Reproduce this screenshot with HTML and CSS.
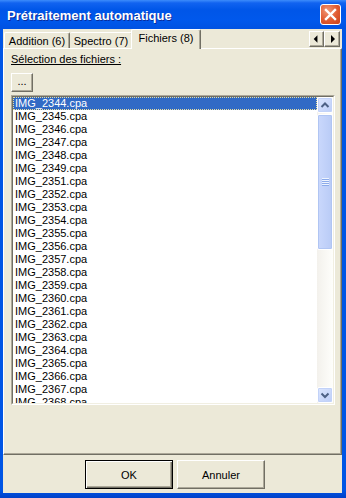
FILE: index.html
```html
<!DOCTYPE html>
<html lang="fr">
<head>
<meta charset="utf-8">
<title>Prétraitement automatique</title>
<link rel="stylesheet" href="styles.css">
</head>
<body>
<div class="window">
  <div class="titlebar">
    <span class="title">Prétraitement automatique</span>
    <span class="close">
      <svg width="19" height="19" viewBox="0 0 19 19"><path d="M5 5 L14 14 M14 5 L5 14" stroke="#fff" stroke-width="2.4" stroke-linecap="square" fill="none"/></svg>
    </span>
  </div>
  <div class="client">
    <div class="tabrow">
      <div class="tab tab-a">Addition (6)</div>
      <div class="tab tab-b">Spectro (7)</div>
      <div class="tab tab-sel">Fichiers (8)</div>
      <div class="tabscroll">
        <span class="sbtn"><svg width="14" height="14" viewBox="0 0 14 14"><polygon points="8,3 8,11 4,7" fill="#000"/></svg></span>
        <span class="sbtn"><svg width="14" height="14" viewBox="0 0 14 14"><polygon points="6,3 6,11 10,7" fill="#000"/></svg></span>
      </div>
    </div>
    <div class="panel">
      <div class="label">Sélection des fichiers :</div>
      <div class="dots">...</div>
      <div class="list">
        <div class="list-in">
          <div class="items">
            <div class="item sel">IMG_2344.cpa</div>
            <div class="item">IMG_2345.cpa</div>
            <div class="item">IMG_2346.cpa</div>
            <div class="item">IMG_2347.cpa</div>
            <div class="item">IMG_2348.cpa</div>
            <div class="item">IMG_2349.cpa</div>
            <div class="item">IMG_2351.cpa</div>
            <div class="item">IMG_2352.cpa</div>
            <div class="item">IMG_2353.cpa</div>
            <div class="item">IMG_2354.cpa</div>
            <div class="item">IMG_2355.cpa</div>
            <div class="item">IMG_2356.cpa</div>
            <div class="item">IMG_2357.cpa</div>
            <div class="item">IMG_2358.cpa</div>
            <div class="item">IMG_2359.cpa</div>
            <div class="item">IMG_2360.cpa</div>
            <div class="item">IMG_2361.cpa</div>
            <div class="item">IMG_2362.cpa</div>
            <div class="item">IMG_2363.cpa</div>
            <div class="item">IMG_2364.cpa</div>
            <div class="item">IMG_2365.cpa</div>
            <div class="item">IMG_2366.cpa</div>
            <div class="item">IMG_2367.cpa</div>
            <div class="item">IMG_2368.cpa</div>
          </div>
          <div class="vscroll">
            <div class="arrow"><svg width="14" height="14" viewBox="0 0 14 14"><path d="M3.5 9 L7 5.5 L10.5 9" stroke="#4D6185" stroke-width="2" fill="none"/></svg></div>
            <div class="track">
              <div class="thumb"><div class="grip"><i></i><i></i><i></i><i></i></div></div>
            </div>
            <div class="arrow"><svg width="14" height="14" viewBox="0 0 14 14"><path d="M3.5 5.5 L7 9 L10.5 5.5" stroke="#4D6185" stroke-width="2" fill="none"/></svg></div>
          </div>
        </div>
      </div>
    </div>
    <div class="footer">
      <div class="btn btn-default">OK</div>
      <div class="btn">Annuler</div>
    </div>
  </div>
</div>
</body>
</html>
```
FILE: styles.css
```css
* { box-sizing: border-box; }
html, body { margin: 0; padding: 0; }
body {
  width: 346px;
  height: 498px;
  overflow: hidden;
  font-family: "Liberation Sans", Arial, sans-serif;
  font-size: 11px;
  color: #000;
}
.window {
  width: 346px;
  height: 498px;
  display: flex;
  flex-direction: column;
  background: linear-gradient(to bottom, #0055E5 0, #0055E5 490px, #0041C8 498px);
}
.titlebar {
  height: 29px;
  flex: none;
  display: flex;
  align-items: center;
  padding-left: 7px;
  padding-top: 2px;
  background: linear-gradient(to bottom, #3D8CFB 0, #1163F0 3px, #0056E8 10px, #0058EC 20px, #0052E2 29px);
}
.title {
  color: #fff;
  font-weight: bold;
  font-size: 13px;
  text-shadow: 1px 1px 0 #0A2C9A;
}
.close {
  margin-left: auto;
  margin-right: 5px;
  margin-top: -2px;
  width: 21px;
  height: 21px;
  border: 1px solid #fff;
  border-radius: 3px;
  background: radial-gradient(circle at 35% 30%, #F09878 0, #E05A30 55%, #C8401A 100%);
  display: flex;
  align-items: center;
  justify-content: center;
}
.client {
  flex: 1;
  margin: 0 4px 5px 3px;
  background: #ECE9D8;
  display: flex;
  flex-direction: column;
}
.tabrow {
  height: 19px;
  flex: none;
  display: flex;
  align-items: flex-end;
  padding-left: 1px;
}
.tab {
  height: 16px;
  padding-top: 2px;
  line-height: 13px;
  text-align: center;
  border-top: 1px solid #fff;
  border-left: 1px solid #fff;
  border-right: 1px solid #716F64;
  border-radius: 2px 2px 0 0;
  box-shadow: inset -1px 0 0 #ACA899;
  background: #ECE9D8;
}
.tab-a { width: 66px; }
.tab-b { width: 63px; border-left: none; }
.tab-sel {
  width: 70px;
  height: 20px;
  margin: 0 0 -1px -2px;
  padding-top: 2px;
  position: relative;
  z-index: 1;
}
.tabscroll {
  margin-left: auto;
  margin-right: 2px;
  align-self: flex-start;
  margin-top: 2px;
  display: flex;
}
.sbtn {
  width: 15px;
  height: 16px;
  border: 1px solid;
  border-color: #fff #716F64 #716F64 #fff;
  box-shadow: inset -1px -1px 0 #ACA899;
  display: flex;
  align-items: center;
  justify-content: center;
}
.sbtn + .sbtn { width: 16px; }
.panel {
  flex: 1;
  border-top: 1px solid #fff;
  border-left: 1px solid #fff;
  border-right: 1px solid #716F64;
  border-bottom: 1px solid #716F64;
  box-shadow: inset -1px -1px 0 #ACA899;
  padding: 4px 0 0 7px;
  display: flex;
  flex-direction: column;
  align-items: flex-start;
}
.label {
  line-height: 13px;
  text-decoration: underline;
}
.dots {
  margin-top: 7px;
  width: 22px;
  height: 19px;
  border: 1px solid;
  border-color: #fff #716F64 #716F64 #fff;
  box-shadow: inset -1px -1px 0 #ACA899;
  text-align: center;
  line-height: 15px;
}
.list {
  margin-top: 3px;
  width: 324px;
  height: 310px;
  border: 1px solid;
  border-color: #ACA899 #fff #fff #ACA899;
}
.list-in {
  height: 100%;
  border: 1px solid;
  border-color: #716F64 #F1EFE2 #F1EFE2 #716F64;
  background: #fff;
  display: flex;
}
.items {
  flex: 1;
  overflow: hidden;
}
.item {
  height: 13px;
  line-height: 13px;
  padding-left: 2px;
  white-space: nowrap;
}
.item.sel {
  background: #316AC5;
  color: #fff;
  border: 1px dotted #E8DFA0;
  padding-left: 1px;
  line-height: 11px;
}
.vscroll {
  width: 16px;
  flex: none;
  display: flex;
  flex-direction: column;
  background: linear-gradient(to right, #F3F1EC, #FEFEFB);
}
.arrow {
  height: 16px;
  flex: none;
  border: 1px solid #fff;
  border-radius: 2px;
  background: linear-gradient(to bottom right, #DDE7FE, #BCCDF8);
  box-shadow: inset 0 0 0 1px #C2D2F8;
  display: flex;
  align-items: center;
  justify-content: center;
}
.track {
  flex: 1;
  padding-top: 1px;
}
.thumb {
  height: 136px;
  border: 1px solid #fff;
  border-radius: 2px;
  background: linear-gradient(to right, #CAD8FC, #B9CBF6);
  box-shadow: inset 0 0 0 1px #B0C5F3;
  display: flex;
  align-items: center;
  justify-content: center;
}
.grip {
  display: flex;
  flex-direction: column;
  width: 7px;
}
.grip i {
  display: block;
  background: #EEF4FE;
  border-bottom: 1px solid #8CABEA;
  height: 2px;
}
.footer {
  height: 38px;
  flex: none;
  padding: 5px 0 0 82px;
  display: flex;
  gap: 4px;
}
.btn {
  width: 88px;
  height: 29px;
  border: 1px solid;
  border-color: #fff #716F64 #716F64 #fff;
  box-shadow: inset -1px -1px 0 #ACA899;
  display: flex;
  align-items: center;
  justify-content: center;
}
.btn-default {
  border: 1px solid #000;
  box-shadow: inset 1px 1px 0 #fff, inset -1px -1px 0 #716F64, inset -2px -2px 0 #ACA899;
}
```
